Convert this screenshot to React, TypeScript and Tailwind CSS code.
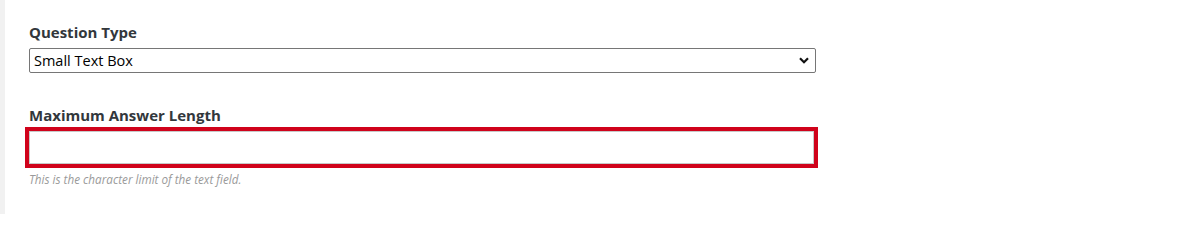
import React from "react";

export default function App() {
  return (
    <div className="flex h-[214px] w-[1200px] overflow-hidden bg-white">
      <div className="w-[5px] shrink-0 bg-[#f1f1f1]" />
      <div className="flex w-[811px] flex-col pl-6 pt-[22px] font-['Open_Sans',sans-serif]">
        <label className="text-[15px] font-bold leading-5 text-[#32373c]">Question Type</label>
        <div className="mt-[6px] flex h-[25px] w-[787px] items-center justify-between rounded-[2px] border border-[#767676] pl-1 pr-[5px] text-[14.5px] text-black">
          <span>Small Text Box</span>
          <svg width="10" height="7" viewBox="0 0 10 7" className="mr-[1px]">
            <path d="M1 1.2 L5 5.2 L9 1.2" fill="none" stroke="#111" strokeWidth="2.2" />
          </svg>
        </div>
        <label className="mt-[32px] text-[15px] font-bold leading-5 text-[#32373c]">Maximum Answer Length</label>
        <div className="mt-[6px] h-[33px] w-[785px] rounded-none border border-[#c8c8c8] bg-white outline-4 outline-solid outline-[#d0021b]" />
        <p className="mt-[7px] text-[11.7px] italic leading-4 text-[#9a9a9a]">This is the character limit of the text field.</p>
      </div>
    </div>
  );
}
